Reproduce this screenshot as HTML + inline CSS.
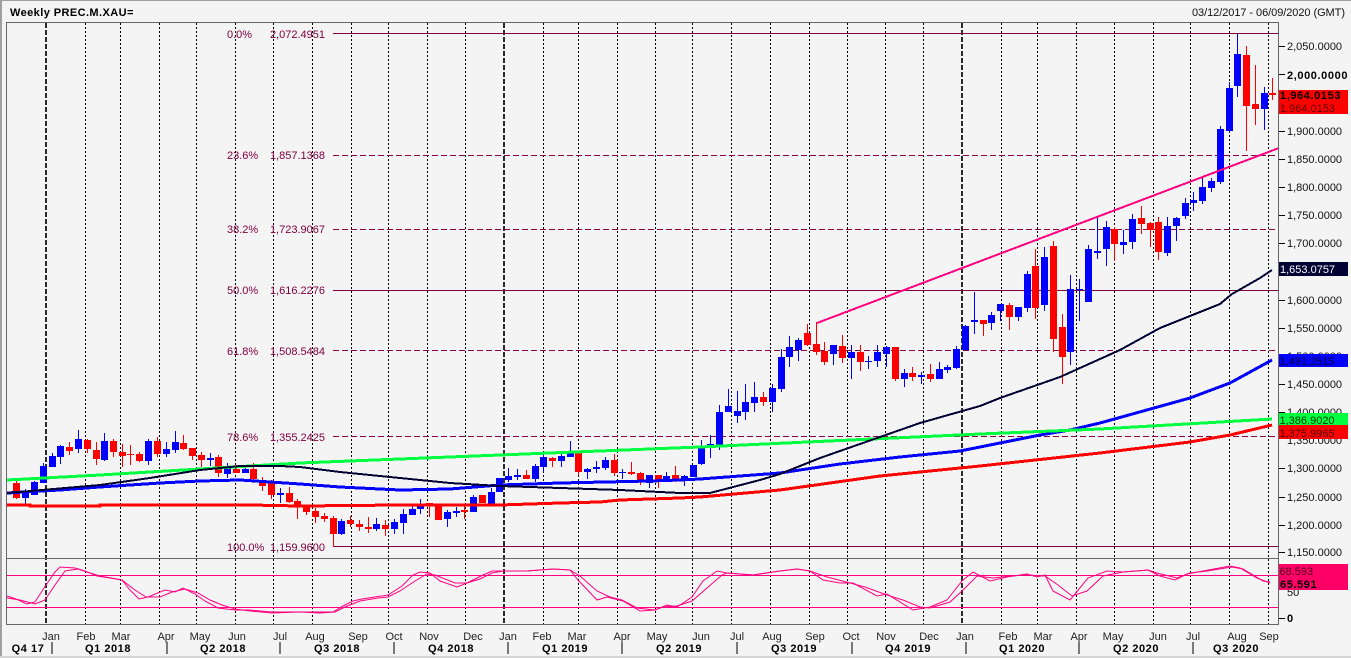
<!DOCTYPE html>
<html><head><meta charset="utf-8"><title>Weekly PREC.M.XAU=</title>
<style>
html,body{margin:0;padding:0;background:#f4f4f4;width:1351px;height:658px;overflow:hidden}
svg{display:block;position:absolute;left:0;top:0}
text{font-family:"Liberation Sans",Arial,sans-serif;font-size:11px;fill:#111}
.b{font-weight:bold;letter-spacing:.6px;fill:#000}
.f{fill:#800040}
.m{text-anchor:middle;fill:#222}
.q{text-anchor:middle;font-weight:bold;letter-spacing:.55px;fill:#000}
</style></head><body>
<svg width="1351" height="658" viewBox="0 0 1351 658" xmlns="http://www.w3.org/2000/svg">
<rect width="1351" height="658" fill="#f4f4f4"/>
<g shape-rendering="crispEdges">
<rect x="0" y="0" width="1351" height="1" fill="#a0a0a0"/>
<rect x="0" y="0" width="2" height="658" fill="#a0a0a0"/>
<rect x="0" y="656" width="1351" height="2" fill="#d4d4d4"/>
<!-- grid -->
<path fill="none" stroke="#000" stroke-width="1" stroke-dasharray="2 2" d="M85.5 23V624M120.5 23V624M159.5 23V624M196.5 23V624M235.5 23V624M273.5 23V624M312.5 23V624M351.5 23V624M388.5 23V624M427.5 23V624M465.5 23V624M543.5 23V624M578.5 23V624M617.5 23V624M655.5 23V624M692.5 23V624M731.5 23V624M770.5 23V624M809.5 23V624M847.5 23V624M885.5 23V624M923.5 23V624M1001.5 23V624M1037.5 23V624M1076.5 23V624M1114.5 23V624M1153.5 23V624M1190.5 23V624M1229.5 23V624M1268.5 23V624"/>
<path fill="none" stroke="#2a2a2a" stroke-width="2" stroke-dasharray="5 2" d="M46 23V624M504 23V624M962 23V624"/>
<!-- fib -->
<path fill="none" stroke="#800040" stroke-width="1" d="M333 33.5H1278M333 290.5H1278M333 546.5H1278"/>
<path fill="none" stroke="#8a0045" stroke-width="1" stroke-dasharray="6 3" d="M333 155.5H1278M333 229.5H1278M333 350.5H1278M333 436.5H1278"/>
<!-- candles -->
<path fill="none" stroke="#0000ff" stroke-width="1" d="M25.5 489V504M34.5 481V495M43.5 463V483M52.5 453V467M60.5 445V464M78.5 430V453M104.5 433V461M148.5 439V465M166.5 442V457M175.5 431V453M210.5 453V466M227.5 463V478M245.5 465V473M280.5 488V503M341.5 519V535M376.5 518V531M394.5 519V534M403.5 509V534M412.5 506V515M420.5 499V514M447.5 510V527M456.5 507V517M473.5 495V512M491.5 488V504M499.5 478V492M508.5 468V482M517.5 469V480M535.5 464V482M543.5 454V472M561.5 454V467M570.5 441V457M587.5 468V479M596.5 461V473M605.5 457V470M622.5 469V479M649.5 475V488M666.5 472V482M684.5 475V486M693.5 465V477M701.5 440V465M710.5 435V458M719.5 405V450M728.5 389V412M737.5 391V423M745.5 384V420M754.5 382V412M772.5 384V412M781.5 349V392M789.5 336V367M798.5 338V361M833.5 345V365M851.5 345V379M868.5 356V369M877.5 345V367M886.5 346V367M904.5 369V387M921.5 372V384M939.5 362V379M947.5 365V373M956.5 346V369M965.5 325V350M974.5 292V334M991.5 312V330M1000.5 304V321M1018.5 307V321M1027.5 271V312M1044.5 247V311M1070.5 275V365M1079.5 279V321M1088.5 245V302M1097.5 217V259M1106.5 221V266M1123.5 230V254M1132.5 214V249M1167.5 217V256M1176.5 217V241M1185.5 198V219M1193.5 192V211M1202.5 178V204M1211.5 178V192M1220.5 126V184M1229.5 82V131M1237.5 34V97M1264.5 87V130"/>
<path fill="none" stroke="#0000ff" stroke-width="7" d="M25.5 491V498M34.5 482V495M43.5 466V483M52.5 456V467M60.5 446V457M78.5 439V449M104.5 441V460M148.5 441V461M166.5 449V454M175.5 442V450M210.5 458V460M227.5 466V474M245.5 469V473M280.5 493V495M341.5 521V534M376.5 524V529M394.5 522V529M403.5 514V523M412.5 509V515M420.5 505V509M447.5 512V519M456.5 511V513M473.5 497V512M491.5 492V504M499.5 478V492M508.5 476V480M517.5 475V477M535.5 466V479M543.5 457V467M561.5 456V461M570.5 453V457M587.5 469V472M596.5 467V469M605.5 460V468M622.5 472V473M649.5 475V483M666.5 476V479M684.5 476V481M693.5 465V477M701.5 448V464M710.5 444V445M719.5 412V445M728.5 406V412M737.5 411V416M745.5 402V412M754.5 397V403M772.5 388V402M781.5 357V389M789.5 347V357M798.5 340V350M833.5 345V354M851.5 352V358M868.5 361V362M877.5 352V361M886.5 347V354M904.5 373V379M921.5 375V377M939.5 369V379M947.5 367V370M956.5 349V368M965.5 326V350M974.5 320V322M991.5 315V323M1000.5 304V311M1018.5 307V317M1027.5 274V308M1044.5 257V305M1070.5 289V352M1079.5 289V290M1088.5 249V302M1097.5 251V253M1106.5 227V249M1123.5 242V245M1132.5 219V242M1167.5 226V253M1176.5 218V226M1185.5 203V216M1193.5 200V203M1202.5 187V201M1211.5 181V188M1220.5 129V182M1229.5 88V131M1237.5 54V86M1264.5 93V109"/>
<path fill="none" stroke="#ff0000" stroke-width="1" d="M16.5 481V499M69.5 442V455M87.5 439V453M96.5 442V465M113.5 439V457M122.5 444V467M130.5 445V465M139.5 452V462M157.5 437V457M183.5 435V450M192.5 448V460M201.5 452V467M218.5 455V477M236.5 465V473M253.5 463V483M262.5 477V491M271.5 480V499M289.5 487V503M297.5 499V519M306.5 505V515M315.5 508V523M324.5 513V522M333.5 516V547M350.5 516V527M359.5 520V531M368.5 517V533M385.5 520V536M429.5 503V517M438.5 504V520M464.5 505V519M482.5 495V503M526.5 470V479M552.5 457V467M578.5 453V475M614.5 454V476M631.5 462V475M640.5 472V485M658.5 475V488M675.5 466V482M763.5 392V406M807.5 324V346M816.5 322V355M824.5 342V365M842.5 335V363M860.5 345V371M895.5 347V381M912.5 367V381M930.5 364V382M983.5 320V336M1009.5 303V330M1035.5 249V319M1053.5 241V352M1062.5 314V384M1114.5 227V261M1141.5 206V234M1150.5 222V247M1158.5 217V260M1246.5 46V151M1255.5 65V125M1272.5 78V100"/>
<path fill="none" stroke="#ff0000" stroke-width="7" d="M16.5 483V498M69.5 447V451M87.5 440V449M96.5 450V459M113.5 441V452M122.5 452V456M130.5 454V455M139.5 454V461M157.5 441V454M183.5 443V449M192.5 448V456M201.5 455V460M218.5 457V473M236.5 469V473M253.5 469V479M262.5 480V486M271.5 483V495M289.5 493V502M297.5 501V506M306.5 507V512M315.5 511V517M324.5 516V519M333.5 518V534M350.5 520V524M359.5 524V527M368.5 527V529M385.5 525V529M429.5 503V505M438.5 505V520M464.5 510V512M482.5 495V503M526.5 475V479M552.5 458V461M578.5 453V472M614.5 460V473M631.5 472V474M640.5 473V481M658.5 475V480M675.5 475V479M763.5 397V402M807.5 333V345M816.5 344V352M824.5 351V362M842.5 346V358M860.5 352V362M895.5 347V379M912.5 373V377M930.5 374V379M983.5 320V324M1009.5 305V317M1035.5 266V308M1053.5 246V339M1062.5 327V357M1114.5 229V244M1141.5 218V224M1150.5 223V230M1158.5 222V252M1246.5 55V106M1255.5 104V109M1272.5 93V95"/>
<!-- MAs -->
<polyline fill="none" stroke="#ff0000" stroke-width="3" points="7,505 30,505 30,506 100,506 100,505 170,505 250,505 300,506 400,505 500,505 560,503 600,502 620,500 680,498 700,497 780,490 880,476 980,466 1100,453 1190,442 1230,435 1272,425"/>
<polyline fill="none" stroke="#0000ff" stroke-width="3" points="7,493 60,490 100,487 160,483 200,481 240,480 300,484 340,487 400,490 450,489 500,485 560,483 650,481 680,480 700,479 780,473 840,464 900,457 960,451 980,447 1040,435 1070,430 1100,423 1190,398 1230,383 1272,360"/>
<polyline fill="none" stroke="#00ff40" stroke-width="3" points="7,480 100,475 200,469 300,463 500,455 700,447 980,434 1100,429 1272,419"/>
<polyline fill="none" stroke="#000033" stroke-width="2" points="7,493 100,485 150,478 200,470 240,466 280,466 300,467 340,472 400,478 450,483 500,486 560,488 620,490 680,493 710,493 760,480 780,474 820,458 880,437 920,423 980,406 1000,398 1060,377 1120,350 1160,328 1220,304 1232,294 1260,278 1272,270"/>
<polyline fill="none" stroke="#ff0080" stroke-width="2" points="817,323 1279,148"/>
<!-- RSI -->
<rect x="7" y="575" width="1271" height="1" fill="#ff0080"/>
<rect x="7" y="607" width="1271" height="1" fill="#ff0080"/>
</g>
<polyline fill="none" stroke="#ff0080" stroke-width="1" points="7,596 16,599 27,604 35,602 46,585 55,572 60,567 75,568 85,571 97,576 110,578 122,580 130,590 139,599 148,597 165,590 175,592 183,588 195,594 205,601 218,608 235,610 250,610 272,612 300,612 320,612 333,612 343,606 353,601 362,599 388,595 402,586 413,575 420,572 430,573 440,581 457,587 467,583 483,575 492,571 503,571 527,571 553,569 570,570 578,580 597,600 607,597 623,601 640,611 655,610 667,605 677,607 692,597 703,581 717,571 727,573 753,575 780,571 797,569 810,571 823,580 840,583 853,583 877,596 887,594 913,610 930,607 947,600 962,581 973,572 990,581 1007,577 1027,574 1037,577 1045,575 1053,591 1070,600 1088,578 1107,571 1123,572 1148,570 1160,576 1175,580 1187,574 1203,571 1230,566 1240,568 1257,578 1270,583"/>
<polyline fill="none" stroke="#ff0080" stroke-width="1" points="7,598 20,600 35,604 45,600 55,585 65,571 78,569 90,573 100,576 122,580 135,590 146,597 160,597 172,592 185,589 198,593 210,600 222,605 235,609 250,611 272,613 300,612 320,613 335,612 345,607 360,601 378,598 388,597 400,591 415,581 427,574 435,575 455,583 467,583 480,579 492,573 503,571 527,571 553,569 570,570 580,576 597,591 610,597 622,600 637,608 655,610 663,607 677,606 692,601 707,588 722,575 727,573 753,575 780,571 797,569 810,571 827,577 850,583 865,587 887,595 903,600 920,607 930,608 950,602 962,591 977,576 993,578 1010,576 1027,575 1045,576 1058,585 1072,596 1087,591 1103,576 1123,572 1148,570 1157,573 1177,578 1190,573 1207,571 1232,567 1243,569 1263,581 1270,582"/>
<g shape-rendering="crispEdges">
<!-- frames -->
<rect x="6" y="22" width="1273" height="1" fill="#666"/>
<rect x="6" y="22" width="1" height="603" fill="#666"/>
<rect x="1278" y="22" width="1" height="603" fill="#666"/>
<rect x="6" y="558" width="1273" height="1" fill="#666"/>
<rect x="6" y="624" width="1273" height="1" fill="#666"/>
<!-- ticks -->
<path stroke="#000" stroke-width="1" fill="none" d="M1279 46.5h6M1279 74.5h6M1279 131.5h6M1279 159.5h6M1279 187.5h6M1279 215.5h6M1279 243.5h6M1279 300.5h6M1279 328.5h6M1279 384.5h6M1279 412.5h6M1279 468.5h6M1279 497.5h6M1279 525.5h6M1279 552.5h6M1279 618.5h6"/>
<!-- quarter separators -->
<path stroke="#000" stroke-width="1" fill="none" d="M52 642V654M167 642V654M280 642V654M394 642V654M508 642V654M622 642V654M737 642V654M852 642V654M966 642V654M1079 642V654M1193 642V654"/>
</g>
<!-- header -->
<text x="10" y="16" style="font-weight:bold;letter-spacing:.42px;fill:#000">Weekly PREC.M.XAU=</text>
<text x="1345" y="16" text-anchor="end" textLength="153">03/12/2017 - 06/09/2020 (GMT)</text>
<!-- fib labels -->
<g class="f">
<text class="f" x="227" y="38">0.0%</text><text class="f" x="325" y="38" text-anchor="end">2,072.4951</text>
<text class="f" x="227" y="159">23.6%</text><text class="f" x="325" y="159" text-anchor="end">1,857.1368</text>
<text class="f" x="227" y="233">38.2%</text><text class="f" x="325" y="233" text-anchor="end">1,723.9067</text>
<text class="f" x="227" y="294">50.0%</text><text class="f" x="325" y="294" text-anchor="end">1,616.2276</text>
<text class="f" x="227" y="355">61.8%</text><text class="f" x="325" y="355" text-anchor="end">1,508.5484</text>
<text class="f" x="227" y="441">78.6%</text><text class="f" x="325" y="441" text-anchor="end">1,355.2425</text>
<text class="f" x="227" y="551">100.0%</text><text class="f" x="325" y="551" text-anchor="end">1,159.9600</text>
</g>
<!-- axis labels -->
<g>
<text x="1287" y="50">2,050.0000</text>
<text class="b" x="1287" y="79">2,000.0000</text>
<text x="1287" y="135">1,900.0000</text>
<text x="1287" y="163">1,850.0000</text>
<text x="1287" y="191">1,800.0000</text>
<text x="1287" y="219">1,750.0000</text>
<text x="1287" y="247">1,700.0000</text>
<text x="1287" y="304">1,600.0000</text>
<text x="1287" y="332">1,550.0000</text>
<text x="1287" y="360">1,500.0000</text>
<text x="1287" y="388">1,450.0000</text>
<text x="1287" y="416">1,400.0000</text>
<text x="1287" y="444">1,350.0000</text>
<text x="1287" y="472">1,300.0000</text>
<text x="1287" y="501">1,250.0000</text>
<text x="1287" y="529">1,200.0000</text>
<text x="1287" y="556">1,150.0000</text>
<text x="1287" y="596">50</text>
<text class="b" x="1287" y="622">0</text>
</g>
<!-- boxes -->
<g shape-rendering="crispEdges">
<rect x="1279" y="90" width="69" height="24" fill="#ff0000"/>
<rect x="1279" y="262" width="69" height="14" fill="#000033"/>
<rect x="1279" y="354" width="69" height="13" fill="#0000ff"/>
<rect x="1279" y="413" width="69" height="12" fill="#00ff40"/>
<rect x="1279" y="425" width="69" height="14" fill="#ff0000"/>
<rect x="1279" y="564" width="69" height="26" fill="#ff0066"/>
</g>
<text class="b" x="1280" y="99">1,964.0153</text>
<text x="1280" y="112" style="fill:#5a0000">1,964.0153</text>
<text x="1280" y="273" style="fill:#fff">1,653.0757</text>
<text x="1279.5" y="365" style="fill:#000033">1,491.2515</text>
<text x="1279.5" y="424" style="fill:#003300">1,386.9020</text>
<text x="1279.5" y="437" style="fill:#4a0000">1,375.9965</text>
<text x="1279.5" y="575" style="fill:#4a0020">68.593</text>
<text class="b" x="1280" y="588">65.591</text>
<!-- months -->
<g>
<text class="m" x="51" y="640">Jan</text><text class="m" x="86" y="640">Feb</text><text class="m" x="121" y="640">Mar</text><text class="m" x="166" y="640">Apr</text><text class="m" x="200" y="640">May</text><text class="m" x="237" y="640">Jun</text><text class="m" x="280" y="640">Jul</text><text class="m" x="315" y="640">Aug</text><text class="m" x="358" y="640">Sep</text><text class="m" x="394" y="640">Oct</text><text class="m" x="429" y="640">Nov</text><text class="m" x="473" y="640">Dec</text><text class="m" x="508" y="640">Jan</text><text class="m" x="542" y="640">Feb</text><text class="m" x="577" y="640">Mar</text><text class="m" x="622" y="640">Apr</text><text class="m" x="657" y="640">May</text><text class="m" x="701" y="640">Jun</text><text class="m" x="737" y="640">Jul</text><text class="m" x="772" y="640">Aug</text><text class="m" x="815" y="640">Sep</text><text class="m" x="851" y="640">Oct</text><text class="m" x="886" y="640">Nov</text><text class="m" x="929" y="640">Dec</text><text class="m" x="965" y="640">Jan</text><text class="m" x="1008" y="640">Feb</text><text class="m" x="1043" y="640">Mar</text><text class="m" x="1079" y="640">Apr</text><text class="m" x="1113" y="640">May</text><text class="m" x="1158" y="640">Jun</text><text class="m" x="1193" y="640">Jul</text><text class="m" x="1237" y="640">Aug</text><text class="m" x="1269" y="640">Sep</text>
</g>
<!-- quarters -->
<g>
<text class="q" x="28" y="652">Q4 17</text><text class="q" x="108" y="652">Q1 2018</text><text class="q" x="223" y="652">Q2 2018</text><text class="q" x="337" y="652">Q3 2018</text><text class="q" x="451" y="652">Q4 2018</text><text class="q" x="565" y="652">Q1 2019</text><text class="q" x="679" y="652">Q2 2019</text><text class="q" x="794" y="652">Q3 2019</text><text class="q" x="908" y="652">Q4 2019</text><text class="q" x="1022" y="652">Q1 2020</text><text class="q" x="1136" y="652">Q2 2020</text><text class="q" x="1236" y="652">Q3 2020</text>
</g>
</svg>
</body></html>
